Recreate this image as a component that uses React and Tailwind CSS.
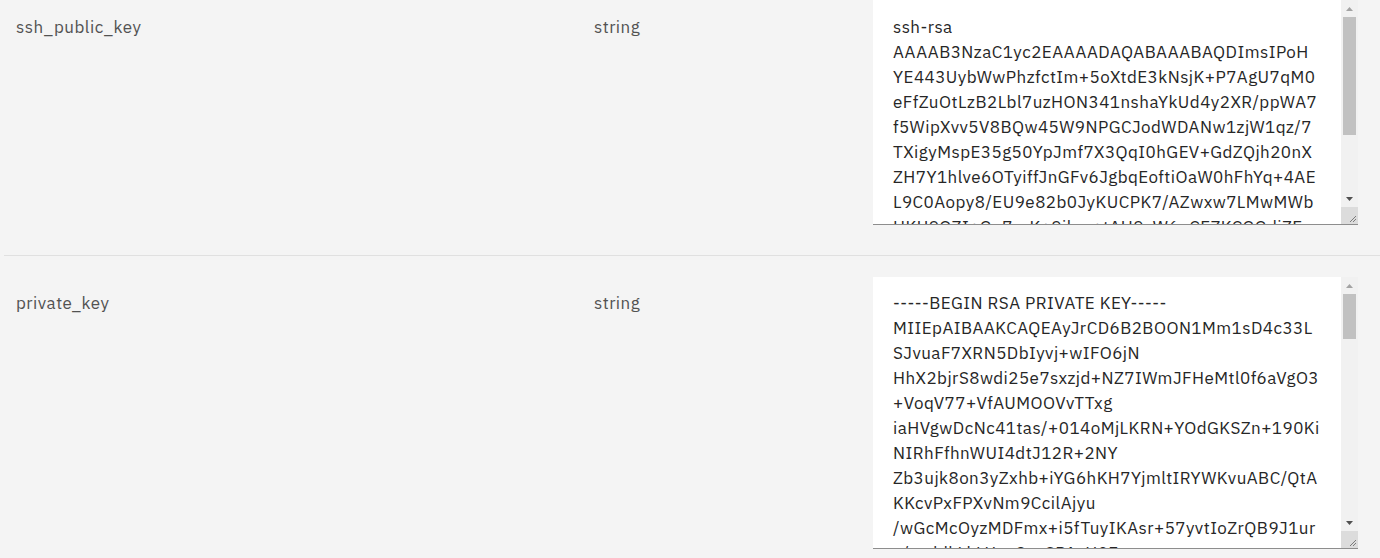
import React from "react";

const B64 = "ABCDEFGHIJKLMNOPQRSTUVWXYZabcdefghijklmnopqrstuvwxyz0123456789+/";

function gen(seed, n) {
  let s = seed >>> 0;
  let out = "";
  for (let i = 0; i < n; i++) {
    s = (Math.imul(s, 1103515245) + 12345) >>> 0;
    out += B64[(s >>> 16) % 64];
  }
  return out;
}

const sshLines = [
  "ssh-rsa",
  "AAAAB3NzaC1yc2EAAAADAQABAAABAQDImsIPoH",
  "YE443UybWwPhzfctIm+5oXtdE3kNsjK+P7AgU7qM0",
  "eFfZuOtLzB2Lbl7uzHON341nshaYkUd4y2XR/ppWA7",
  "f5WipXvv5V8BQw45W9NPGCJodWDANw1zjW1qz/7",
  "TXigyMspE35g50YpJmf7X3QqI0hGEV+GdZQjh20nX",
  "ZH7Y1hlve6OTyiffJnGFv6JgbqEoftiOaW0hFhYq+4AE",
  "L9C0Aopy8/EU9e82b0JyKUCPK7/AZwxw7LMwMWb",
  "HKU9OZI+Gn7zzK+9ibm+tAH9xW6uCEZKCGGdiZE",
  "q3Rw8vT2LmN5pKj7sXy0aBcDeF1gHiJkLmNoPq",
  "RsTuVwXyZ+1a2b3c4d5e6f7g8h9i0jK user@host",
];

const privLines = (() => {
  const lines = [
    "-----BEGIN RSA PRIVATE KEY-----",
    "MIIEpAIBAAKCAQEAyJrCD6B2BOON1Mm1sD4c33L",
    "SJvuaF7XRN5DbIyvj+wIFO6jN",
    "HhX2bjrS8wdi25e7sxzjd+NZ7IWmJFHeMtl0f6aVgO3",
    "+VoqV77+VfAUMOOVvTTxg",
    "iaHVgwDcNc41tas/+014oMjLKRN+YOdGKSZn+190Ki",
    "NIRhFfhnWUI4dtJ12R+2NY",
    "Zb3ujk8on3yZxhb+iYG6hKH7YjmltIRYWKvuABC/QtA",
    "KKcvPxFPXvNm9CcilAjyu",
    "/wGcMcOyzMDFmx+i5fTuyIKAsr+57yvtIoZrQB9J1ur",
    "c/zuddkLkLUyaQzaSPAvH0Ez",
  ];
  for (let i = 0; i < 20; i++) {
    const full = gen(7919 * (i + 3), 64);
    const cut = 39 + (i * 7) % 5;
    lines.push(full.slice(0, cut));
    lines.push(full.slice(cut));
  }
  lines.push("Xp2Lq8Rt0Vw3Yz6Bc9Df==");
  lines.push("-----END RSA PRIVATE KEY-----");
  return lines;
})();

function Arrow({ dir, color }) {
  return (
    <svg width="7" height="4" viewBox="0 0 7 4" className="block">
      {dir === "up" ? (
        <path d="M0 4 L3.5 0 L7 4 Z" fill={color} />
      ) : (
        <path d="M0 0 L7 0 L3.5 4 Z" fill={color} />
      )}
    </svg>
  );
}

function Scrollbar({ thumbClass }) {
  return (
    <div className="w-[17px] shrink-0 flex flex-col bg-[#f1f1f1]">
      <div className="h-[17px] flex items-center justify-center">
        <Arrow dir="up" color="#a3a3a3" />
      </div>
      <div className="flex-1 flex flex-col">
        <div className={`${thumbClass} mx-[2px] bg-[#c1c1c1]`} />
      </div>
      <div className="h-[17px] flex items-center justify-center">
        <Arrow dir="down" color="#505050" />
      </div>
      <div className="h-[17px] bg-[#dcdcdc] flex items-end justify-end">
        <svg width="17" height="17" viewBox="0 0 17 17" className="block">
          <path d="M15 9 L9 15 M15 12 L12 15" stroke="#7b7b7b" strokeWidth="1" />
        </svg>
      </div>
    </div>
  );
}

function KeyArea({ lines, heightClass, padClass, thumbClass }) {
  return (
    <div className={`flex w-[485px] ${heightClass} bg-white border-b border-[#8d8d8d]`}>
      <textarea
        readOnly
        wrap="off"
        spellCheck={false}
        defaultValue={lines.join("\n")}
        className={`block flex-1 min-w-0 h-full ${padClass} pl-5 pr-2 pb-3 bg-white border-0 text-[#262626] text-[17px] leading-[25px] tracking-[0.45px] font-['IBM_Plex_Sans','Inter',sans-serif] whitespace-pre overflow-hidden resize-none outline-none`}
      />
      <Scrollbar thumbClass={thumbClass} />
    </div>
  );
}

function Row({ name, type, lines, heightClass, rowPad, padClass, labelPad, thumbClass, border }) {
  return (
    <div className={`flex ml-1 ${rowPad} ${border ? "border-b border-[#e0e0e0]" : ""}`}>
      <div className={`w-[574px] pl-3 ${labelPad} text-[17px] leading-[25px] tracking-[0.5px] text-[#525252]`}>
        {name}
      </div>
      <div className={`w-[279px] pl-4 ${labelPad} text-[17px] leading-[25px] tracking-[0.5px] text-[#525252]`}>
        {type}
      </div>
      <div className="pl-4">
        <KeyArea lines={lines} heightClass={heightClass} padClass={padClass} thumbClass={thumbClass} />
      </div>
    </div>
  );
}

export default function App() {
  return (
    <div className="min-h-screen bg-[#f4f4f4] font-['IBM_Plex_Sans','Inter',sans-serif] overflow-hidden">
      <Row
        name="ssh_public_key"
        type="string"
        lines={sshLines}
        heightClass="h-[225px]"
        rowPad="pt-0 pb-[30px]"
        padClass="pt-[15px]"
        labelPad="pt-[15px]"
        thumbClass="h-[118px]"
        border
      />
      <Row
        name="private_key"
        type="string"
        lines={privLines}
        heightClass="h-[272px]"
        rowPad="pt-[21px] pb-[30px]"
        padClass="pt-[14px]"
        labelPad="pt-[14px]"
        thumbClass="h-[45px]"
      />
    </div>
  );
}
